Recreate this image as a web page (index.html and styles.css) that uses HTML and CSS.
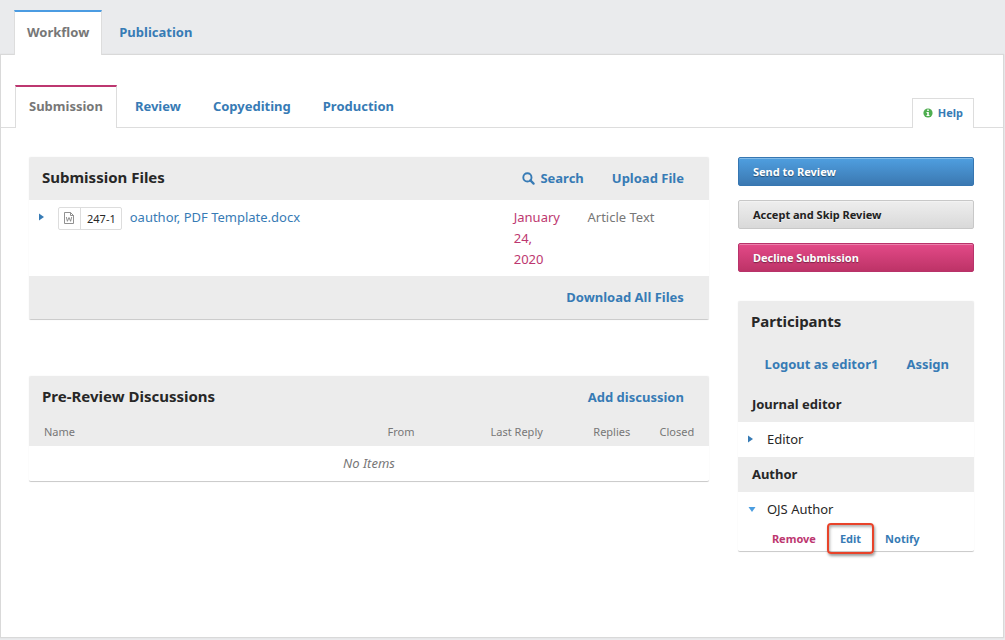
FILE: index.html
```html
<!DOCTYPE html>
<html lang="en">
<head>
<meta charset="utf-8">
<title>Submission Workflow</title>
<link rel="stylesheet" href="styles.css">
</head>
<body>
<nav class="main-tabs" aria-label="Sections">
  <a class="main-tab main-tab-active" href="#workflow">Workflow</a>
  <a class="main-tab" href="#publication">Publication</a>
</nav>
<main class="panel" id="workflow">
  <div class="stage-bar">
    <nav class="stage-tabs" aria-label="Stages">
      <a class="stage-tab stage-tab-active" href="#submission">Submission</a>
      <a class="stage-tab" href="#review">Review</a>
      <a class="stage-tab" href="#copyediting">Copyediting</a>
      <a class="stage-tab" href="#production">Production</a>
    </nav>
    <a class="help" href="#help">
      <svg class="help-icon" viewBox="0 0 10 10" aria-hidden="true"><circle cx="5" cy="5" r="4.6" fill="#4fae50"/><path d="M4.2 1.6h1.6v1.3H4.2zM3.5 3.9h2.3v3h.7v1.2h-3V6.900h.7V5h-.7z" fill="#fff"/></svg>
      Help
    </a>
  </div>
  <div class="content" id="submission">
    <div class="primary">
      <section class="grid">
        <header class="grid-header">
          <h2 class="grid-title">Submission Files</h2>
          <a class="action" href="#search"><svg class="search-icon" viewBox="0 0 13 13" aria-hidden="true"><circle cx="5.400" cy="5.400" r="4.100" fill="none" stroke="#377bb5" stroke-width="1.900"/><path d="M8.400 8.400l3.200 3.200" stroke="#377bb5" stroke-width="2.200" stroke-linecap="round"/></svg>Search</a>
          <a class="action" href="#upload">Upload File</a>
        </header>
        <table class="files">
          <tbody>
            <tr>
              <td class="file-name">
                <div class="file">
                  <button class="toggle" type="button" aria-label="Show file actions"><svg class="arrow-right" viewBox="0 0 5 8" aria-hidden="true"><path d="M0 .5l5 3.500-5 3.500z" fill="#377bb5"/></svg></button>
                  <span class="file-badge">
                    <span class="file-type"><svg class="doc-icon" viewBox="0 0 10 12" aria-hidden="true"><path d="M.5.5h6l3 3v8h-9zM6.500.500v3h3" fill="none" stroke="#858585" stroke-width=".9"/><path d="M2.300 5l1.100 4.300L5 5.500l1.600 3.800L7.700 5" fill="none" stroke="#858585" stroke-width=".9"/></svg></span>
                    <span class="file-id">247-1</span>
                  </span>
                  <a class="file-link" href="#file">oauthor, PDF Template.docx</a>
                </div>
              </td>
              <td class="file-date">January 24, 2020</td>
              <td class="file-kind">Article Text</td>
            </tr>
          </tbody>
        </table>
        <footer class="grid-footer"><a class="action" href="#download">Download All Files</a></footer>
      </section>
      <section class="grid">
        <header class="grid-header">
          <h2 class="grid-title">Pre-Review Discussions</h2>
          <a class="action" href="#add">Add discussion</a>
        </header>
        <table class="discussions">
          <thead>
            <tr><th class="col-name">Name</th><th class="col-from">From</th><th class="col-last">Last Reply</th><th class="col-replies">Replies</th><th class="col-closed">Closed</th></tr>
          </thead>
          <tbody>
            <tr><td class="empty" colspan="5">No Items</td></tr>
          </tbody>
        </table>
      </section>
    </div>
    <aside class="sidebar">
      <div class="decisions">
        <button class="decision decision-primary" type="button">Send to Review</button>
        <button class="decision" type="button">Accept and Skip Review</button>
        <button class="decision decision-danger" type="button">Decline Submission</button>
      </div>
      <section class="grid">
        <header class="grid-header"><h2 class="grid-title">Participants</h2></header>
        <div class="participant-links">
          <a class="action" href="#logout">Logout as editor1</a>
          <a class="action" href="#assign">Assign</a>
        </div>
        <h3 class="role">Journal editor</h3>
        <div class="person">
          <button class="toggle" type="button" aria-label="Show editor actions"><svg class="arrow-right" viewBox="0 0 5 8" aria-hidden="true"><path d="M0 .5l5 3.500-5 3.500z" fill="#377bb5"/></svg></button>
          <span>Editor</span>
        </div>
        <h3 class="role">Author</h3>
        <div class="person">
          <button class="toggle" type="button" aria-label="Hide author actions"><svg class="arrow-down" viewBox="0 0 8 5" aria-hidden="true"><path d="M.5 0h7L4 5z" fill="#4a9de0"/></svg></button>
          <span>OJS Author</span>
        </div>
        <div class="person-actions">
          <a class="person-action remove" href="#remove">Remove</a>
          <a class="person-action highlighted" href="#edit">Edit</a>
          <a class="person-action" href="#notify">Notify</a>
        </div>
      </section>
    </aside>
  </div>
</main>
</body>
</html>
```
FILE: styles.css
```css
* { box-sizing: border-box; }
body {
  display: flex;
  flex-direction: column;
  min-height: 100vh;
  margin: 0;
  padding: 0 1px 2px 0;
  background: #eaebed;
  color: #272727;
  font: 13px/21px "Noto Sans", sans-serif;
}
a { color: #377bb5; text-decoration: none; }
h2, h3 { margin: 0; }
button { font-family: inherit; cursor: pointer; }
svg { display: block; flex: none; }

.main-tabs {
  display: flex;
  gap: 4px;
  padding: 10px 14px 0;
}
.main-tab {
  height: 45px;
  padding: 10px 12px 0;
  border: 1px solid transparent;
  border-top-width: 2px;
  border-bottom: 0;
  font-weight: 700;
}
.main-tab-active {
  position: relative;
  z-index: 1;
  background: #fff;
  border-color: #4b9ce2 #ddd transparent;
  color: #777;
}
.panel {
  flex: 1;
  margin-top: -1px;
  background: #fff;
  border: 1px solid #d9d9d9;
  box-shadow: 0 0 1px rgba(0, 0, 0, .1);
}
.stage-bar {
  display: flex;
  justify-content: space-between;
  align-items: flex-end;
  padding: 30px 29px 0 14px;
  border-bottom: 1px solid #ddd;
}
.stage-tabs { display: flex; gap: 4px; margin-bottom: -1px; }
.stage-tab {
  height: 43px;
  padding: 9px 13px 0;
  border: 1px solid transparent;
  border-top-width: 2px;
  border-bottom: 0;
  font-weight: 700;
}
.stage-tab-active {
  background: #fff;
  border-color: #bd3770 #ddd transparent;
  color: #777;
}
.help {
  display: flex;
  align-items: center;
  gap: 5px;
  height: 30px;
  margin-bottom: -1px;
  padding: 0 10px 2px;
  background: #fff;
  border: 1px solid #ddd;
  border-bottom: 0;
  font-size: 11px;
  font-weight: 700;
}
.help-icon { width: 10px; height: 10px; }

.content {
  display: grid;
  grid-template-columns: minmax(0, 72fr) minmax(0, 25fr);
  gap: 29px;
  padding: 29px 29px 29px 28px;
}
.primary { display: grid; gap: 56px; align-content: start; }
.sidebar { display: grid; gap: 29px; align-content: start; }
.grid {
  border-bottom: 1px solid #ccc;
  border-radius: 2px;
  box-shadow: 0 0 1px rgba(0, 0, 0, .15);
}
.grid-header {
  display: flex;
  align-items: center;
  gap: 28px;
  height: 43px;
  padding: 0 25px 0 13px;
  background: #ececec;
  border-radius: 2px 2px 0 0;
}
.grid-title { flex: 1; padding-bottom: 2px; font-size: 15px; line-height: 21px; font-weight: 700; }
.action { display: inline-flex; align-items: center; font-weight: 700; }
.search-icon { width: 13px; height: 13px; margin-right: 5px; }
.grid-footer {
  display: flex;
  justify-content: flex-end;
  padding: 11px 25px;
  background: #ececec;
}
table { width: 100%; border-collapse: collapse; table-layout: fixed; }
td, th { padding: 0; text-align: left; vertical-align: top; }

.files td { padding-top: 7px; padding-bottom: 6px; }
.file-name { width: 71%; }
.files .file-date { width: 11%; padding-left: 2px; padding-right: 24px; color: #bd3770; }
.file-kind { padding-left: 1px; color: #777; }
.file { display: flex; align-items: flex-start; padding-left: 10px; }
.toggle {
  display: flex;
  align-items: center;
  width: 19px;
  height: 20px;
  padding: 0;
  background: none;
  border: 0;
}
.arrow-right { width: 5px; height: 8px; }
.arrow-down { width: 8px; height: 5px; }
.file-badge {
  display: flex;
  margin-right: 8px;
  border: 1px solid #ddd;
  border-radius: 2px;
  font-size: 11px;
}
.file-type { padding: 4px 6px 5px 5px; border-right: 1px solid #ddd; }
.doc-icon { width: 10px; height: 12px; }
.file-id { padding: 0 5px 0 6px; }

.discussions th {
  padding: 2px 0 4px;
  background: #ececec;
  color: #777;
  font-size: 11px;
  font-weight: 400;
}
.discussions .col-name { width: 52%; padding-left: 15px; }
.discussions .col-from { width: 15%; padding-left: 5px; }
.discussions .col-last { width: 16%; padding-left: 6px; }
.discussions .col-replies { width: 9%; }
.discussions .col-closed { width: 8%; padding-left: 5px; }
.discussions .empty { padding: 7px; text-align: center; font-style: italic; color: #777; }

.decisions { display: grid; gap: 14px; }
.decision {
  height: 29px;
  padding: 0 14px;
  background: linear-gradient(#eee, #d9d9d9);
  border: 1px solid #c8c8c8;
  border-radius: 2px;
  box-shadow: inset 0 1px rgba(255, 255, 255, .3);
  color: #222;
  font-size: 11px;
  font-weight: 700;
  text-align: left;
  text-shadow: 0 1px rgba(255, 255, 255, .6);
}
.decision-primary {
  background: linear-gradient(#4f9fe0, #3b78b1);
  border-color: #3676b1;
  color: #fff;
  text-shadow: 0 1px 1px rgba(0, 0, 0, .4);
}
.decision-danger {
  background: linear-gradient(#e34a88, #bd3367);
  border-color: #b8336a;
  color: #fff;
  text-shadow: 0 1px 1px rgba(0, 0, 0, .4);
}
.participant-links {
  display: flex;
  justify-content: flex-end;
  gap: 28px;
  padding: 10px 25px 12px;
  background: #ececec;
}
.role {
  padding: 7px 14px;
  background: #ececec;
  font-size: 13px;
  line-height: 21px;
  font-weight: 700;
}
.person { display: flex; padding: 7px 10px; }
.person-actions {
  display: flex;
  align-items: center;
  height: 24px;
  padding: 0 0 2px 34px;
  font-size: 11px;
  font-weight: 700;
}
.person-action { margin-right: 11px; }
.remove { color: #bd3770; }
.highlighted {
  padding: 3px 11px;
  border: 2px solid #e8432a;
  border-radius: 4px;
  box-shadow: 1px 2px 3px rgba(0, 0, 0, .4), inset 1px 2px 3px rgba(0, 0, 0, .3);
}
```
